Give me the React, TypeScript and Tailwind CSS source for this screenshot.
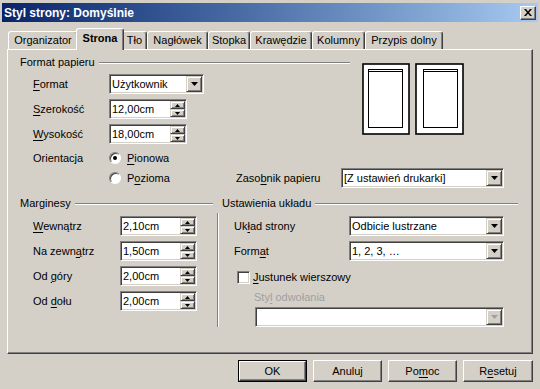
import React from "react";

const SUNKEN =
  "bg-white border border-t-[#808080] border-l-[#808080] border-b-white border-r-white shadow-[inset_1px_1px_0_#404040,inset_-1px_-1px_0_#d4d0c8]";
const RAISED =
  "bg-[#d4d0c8] border border-t-[#d4d0c8] border-l-[#d4d0c8] border-b-[#404040] border-r-[#404040] shadow-[inset_1px_1px_0_#ffffff,inset_-1px_-1px_0_#808080]";
const BTN =
  "bg-[#d4d0c8] border border-t-white border-l-white border-b-[#404040] border-r-[#404040] shadow-[inset_-1px_-1px_0_#808080]";

function Tri({ disabled, up, small }: { disabled?: boolean; up?: boolean; small?: boolean }) {
  const c = disabled ? "#a0a0a0" : "#000";
  if (small) {
    return (
      <svg width="5" height="3" viewBox="0 0 5 3">
        <path d={up ? "M2.5 0 L5 3 L0 3 Z" : "M0 0 L5 0 L2.5 3 Z"} fill={c} />
      </svg>
    );
  }
  return (
    <svg width="7" height="4" viewBox="0 0 7 4">
      <path d="M0 0 L7 0 L3.5 4 Z" fill={c} />
    </svg>
  );
}

function Dropdown({ value, w, disabled }: { value: string; w: string; disabled?: boolean }) {
  return (
    <div className={`${SUNKEN} ${w} h-[20px] flex items-stretch p-[1px]`}>
      <div className="flex-1 pl-[1px] leading-[16px] whitespace-nowrap overflow-hidden">{value}</div>
      <div className={`${RAISED} w-[16px] flex items-center justify-center`}>
        <Tri disabled={disabled} />
      </div>
    </div>
  );
}

function Spinner({ value, w }: { value: string; w: string }) {
  return (
    <div className={`${SUNKEN} ${w} h-[20px] flex items-stretch p-[1px]`}>
      <div className="flex-1 pl-[1px] leading-[16px] whitespace-nowrap">{value}</div>
      <div className="w-[15px] flex flex-col">
        <div className={`${RAISED} h-[8px] flex items-center justify-center`}>
          <Tri up small />
        </div>
        <div className={`${RAISED} h-[8px] flex items-center justify-center`}>
          <Tri small />
        </div>
      </div>
    </div>
  );
}

function Header({ title, w }: { title: string; w: string }) {
  return (
    <div className={`${w} h-[13px] flex items-center gap-[4px]`}>
      <span className="leading-[13px] whitespace-nowrap">{title}</span>
      <div className="flex-1 h-[2px] border-t border-t-[#808080] border-b border-b-white mt-[1px]" />
    </div>
  );
}

function Radio({ checked }: { checked?: boolean }) {
  return (
    <div className="w-[12px] h-[12px] rounded-full bg-white border border-t-[#808080] border-l-[#808080] border-b-white border-r-white shadow-[inset_1px_1px_0_#404040] flex items-center justify-center">
      {checked && <div className="w-[4px] h-[4px] rounded-full bg-black" />}
    </div>
  );
}

function U({ children }: { children: React.ReactNode }) {
  return <span className="underline underline-offset-[2px]">{children}</span>;
}

function Tab({ label, w, selected }: { label: string; w: string; selected?: boolean }) {
  if (selected) {
    return (
      <div
        className={`${w} -mx-[2px] h-[22px] -mb-[1px] z-10 relative bg-[#d4d0c8] border-t border-l border-t-white border-l-white border-r border-r-[#404040] shadow-[inset_-1px_0_0_#808080] rounded-t-[3px] flex items-start justify-center pt-[3px] font-bold leading-[13px]`}
      >
        {label}
      </div>
    );
  }
  return (
    <div
      className={`${w} h-[18px] bg-[#d4d0c8] border-t border-l border-t-white border-l-white border-r border-r-[#404040] shadow-[inset_-1px_0_0_#808080] rounded-t-[3px] flex items-start justify-center pt-[2px] leading-[13px]`}
    >
      {label}
    </div>
  );
}

export default function App() {
  return (
    <div className="w-[540px] h-[389px] bg-[#d4d0c8] text-[11px] text-black font-['Liberation_Sans',Arial,sans-serif] flex flex-col overflow-hidden">
      {/* Title bar */}
      <div className="mx-[2px] mt-[3px] h-[19px] bg-gradient-to-r from-[#0a246a] to-[#a6caf0] flex items-center justify-between pl-[2px] pr-[2px]">
        <span className="text-white font-bold text-[12px] leading-[14px]">Styl strony: Domyślnie</span>
        <div className={`${BTN} w-[16px] h-[14px] flex items-center justify-center`}>
          <svg width="8" height="7" viewBox="0 0 8 7">
            <path d="M0 0 L2 0 L4 2.5 L6 0 L8 0 L5 3.5 L8 7 L6 7 L4 4.5 L2 7 L0 7 L3 3.5 Z" fill="#000" />
          </svg>
        </div>
      </div>

      {/* Tabs */}
      <div className="ml-[8px] mt-[6px] h-[21px] flex items-end">
        <Tab label="Organizator" w="w-[70px]" />
        <Tab label="Strona" w="w-[48px]" selected />
        <Tab label="Tło" w="w-[25px]" />
        <Tab label="Nagłówek" w="w-[61px]" />
        <Tab label="Stopka" w="w-[42px]" />
        <Tab label="Krawędzie" w="w-[62px]" />
        <Tab label="Kolumny" w="w-[53px]" />
        <Tab label="Przypis dolny" w="w-[78px]" />
      </div>

      {/* Panel */}
      <div className="ml-[7px] w-[526px] h-[305px] border-t border-l border-t-white border-l-white border-r border-b border-r-[#404040] border-b-[#404040] shadow-[inset_-1px_-1px_0_#808080] pl-[12px] pt-[6px] flex flex-col">
        {/* Format papieru */}
        <div className="flex">
          <div className="w-[330px] flex flex-col">
            <Header title="Format papieru" w="w-[330px]" />
            <div className="ml-[13px] mt-[5px] flex flex-col">
              <div className="h-[20px] flex items-center">
                <span className="w-[76px]">
                  <U>F</U>ormat
                </span>
                <Dropdown value="Użytkownik" w="w-[95px]" />
              </div>
              <div className="mt-[5px] h-[20px] flex items-center">
                <span className="w-[76px]">
                  <U>S</U>zerokość
                </span>
                <Spinner value="12,00cm" w="w-[78px]" />
              </div>
              <div className="mt-[5px] h-[20px] flex items-center">
                <span className="w-[76px]">
                  <U>W</U>ysokość
                </span>
                <Spinner value="18,00cm" w="w-[78px]" />
              </div>
              <div className="mt-[6px] h-[16px] flex items-center">
                <span className="w-[76px]">Orientacja</span>
                <Radio checked />
                <span className="ml-[6px]">
                  <U>P</U>ionowa
                </span>
              </div>
            </div>
          </div>
          <div className="ml-[12px] mt-[7px]">
            <svg width="102" height="72" viewBox="0 0 102 72">
              <rect x="1" y="1" width="46" height="70" fill="#fff" stroke="#000" strokeWidth="1.6" />
              <rect x="6.5" y="6.5" width="34" height="58" fill="#fff" stroke="#000" strokeWidth="1" />
              <line x1="6.5" y1="8.5" x2="40.5" y2="8.5" stroke="#000" strokeWidth="1" />
              <rect x="54" y="1" width="47" height="70" fill="#fff" stroke="#000" strokeWidth="1.6" />
              <rect x="61.5" y="6.5" width="34" height="58" fill="#fff" stroke="#000" strokeWidth="1" />
              <line x1="61.5" y1="8.5" x2="95.5" y2="8.5" stroke="#000" strokeWidth="1" />
            </svg>
          </div>
        </div>
        <div className="ml-[13px] mt-[2px] h-[20px] flex items-center">
          <span className="w-[76px]" />
          <div className="w-[127px] flex items-center">
            <Radio />
            <span className="ml-[6px]">
              P<U>o</U>zioma
            </span>
          </div>
          <span className="w-[105px]">
            Zaso<U>b</U>nik papieru
          </span>
          <Dropdown value="[Z ustawień drukarki]" w="w-[163px]" />
        </div>

        {/* Lower */}
        <div className="mt-[9px] flex">
          <div className="w-[193px] flex flex-col">
            <Header title="Marginesy" w="w-[193px]" />
            <div className="ml-[13px] mt-[6px] flex flex-col gap-[5px]">
              <div className="h-[20px] flex items-center">
                <span className="w-[87px]">
                  <U>W</U>ewnątrz
                </span>
                <Spinner value="2,10cm" w="w-[77px]" />
              </div>
              <div className="h-[20px] flex items-center">
                <span className="w-[87px]">
                  Na zewn<U>ą</U>trz
                </span>
                <Spinner value="1,50cm" w="w-[77px]" />
              </div>
              <div className="h-[20px] flex items-center">
                <span className="w-[87px]">
                  Od <U>g</U>óry
                </span>
                <Spinner value="2,00cm" w="w-[77px]" />
              </div>
              <div className="h-[20px] flex items-center">
                <span className="w-[87px]">
                  Od <U>d</U>ołu
                </span>
                <Spinner value="2,00cm" w="w-[77px]" />
              </div>
            </div>
          </div>
          <div className="ml-[4px] mt-[16px] w-[2px] h-[114px] border-l border-l-[#808080] border-r border-r-white" />
          <div className="ml-[3px] w-[296px] flex flex-col">
            <Header title="Ustawienia układu" w="w-[296px]" />
            <div className="ml-[12px] mt-[6px] h-[20px] flex items-center">
              <span className="w-[115px]">
                Uk<U>ł</U>ad strony
              </span>
              <Dropdown value="Odbicie lustrzane" w="w-[155px]" />
            </div>
            <div className="ml-[12px] mt-[5px] h-[20px] flex items-center">
              <span className="w-[115px]">
                Form<U>a</U>t
              </span>
              <Dropdown value="1, 2, 3, …" w="w-[155px]" />
            </div>
            <div className="ml-[15px] mt-[6px] h-[20px] flex items-center">
              <div className={`${SUNKEN} w-[13px] h-[13px]`} />
              <span className="ml-[3px]">
                <U>J</U>ustunek wierszowy
              </span>
            </div>
            <div className="ml-[32px] mt-[4px] h-[13px] leading-[13px] text-[#a0a0a0]">
              Sty<U>l</U> odwołania
            </div>
            <div className="ml-[33px] mt-[3px]">
              <Dropdown value="" w="w-[249px]" disabled />
            </div>
          </div>
        </div>
      </div>

      {/* Buttons */}
      <div className="mt-[6px] ml-[238px] flex gap-[6px]">
        <div className="w-[69px] h-[22px] border border-black">
          <div className={`${BTN} w-full h-full flex items-center justify-center leading-[13px]`}>OK</div>
        </div>
        <div className={`${BTN} w-[69px] h-[22px] flex items-center justify-center leading-[13px]`}>Anuluj</div>
        <div className={`${BTN} w-[69px] h-[22px] flex items-center justify-center leading-[13px]`}>
          <span>
            Po<U>m</U>oc
          </span>
        </div>
        <div className={`${BTN} w-[70px] h-[22px] flex items-center justify-center leading-[13px]`}>
          <span>
            R<U>e</U>setuj
          </span>
        </div>
      </div>
    </div>
  );
}
